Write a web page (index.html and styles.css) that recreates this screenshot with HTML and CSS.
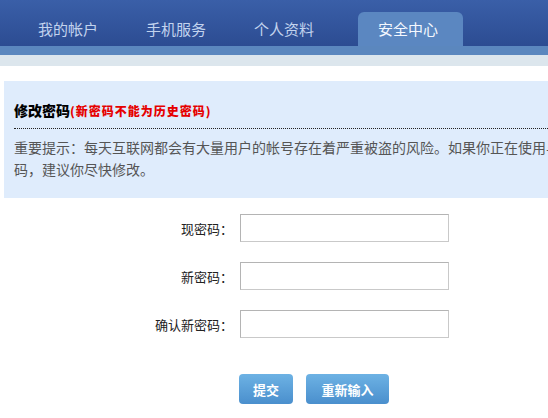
FILE: index.html
```html
<!DOCTYPE html>
<html lang="zh">
<head>
<meta charset="utf-8">
<title>修改密码</title>
<link rel="stylesheet" href="styles.css">
</head>
<body>
<div class="page">
  <div class="nav">
    <a class="tab">我的帐户</a>
    <a class="tab">手机服务</a>
    <a class="tab">个人资料</a>
    <a class="tab active">安全中心</a>
  </div>
  <div class="band-light"></div>
  <div class="band-pale"></div>

  <div class="panel">
    <div class="panel-head">
      <span class="title">修改密码</span><span class="warn">(新密码不能为历史密码)</span>
    </div>
    <p class="tip">重要提示：每天互联网都会有大量用户的帐号存在着严重被盗的风险。如果你正在使用与其他网站相同的密<br>码，建议你尽快修改。</p>
  </div>

  <form class="form">
    <label class="label">现密码：</label>
    <input class="field" type="password">
    <label class="label">新密码：</label>
    <input class="field" type="password">
    <label class="label">确认新密码：</label>
    <input class="field" type="password">
  </form>

  <div class="actions">
    <button class="btn" type="button">提交</button>
    <button class="btn" type="button">重新输入</button>
  </div>
</div>
</body>
</html>
```

FILE: styles.css
```css
html, body {
  margin: 0;
  padding: 0;
  background: #ffffff;
  overflow: hidden;
}

body {
  font-family: "Noto Sans CJK SC", "DejaVu Sans", sans-serif;
  width: 548px;
  height: 418px;
}

.page {
  width: 760px;
}

.nav {
  height: 46px;
  box-sizing: border-box;
  padding: 12px 0 0 18px;
  display: flex;
  align-items: flex-end;
  background: linear-gradient(#3a5fa8, #2c4c92);
}

.tab {
  display: block;
  height: 34px;
  line-height: 34px;
  padding: 0 20px;
  margin-right: 8px;
  font-size: 15px;
  color: #c2d3ee;
  white-space: nowrap;
}

.tab.active {
  margin-left: 16px;
  padding: 0 25px 0 20px;
  background: #5b87c1;
  border-radius: 6px 6px 0 0;
  color: #f4f8ff;
}

.band-light {
  height: 9px;
  background: #5b87be;
}

.band-pale {
  height: 11px;
  background: #dce6ed;
}

.panel {
  margin: 15px 0 0 4px;
  background: #dfecfc;
  padding: 18px 0 18px 10px;
}

.panel-head {
  height: 20px;
  line-height: 20px;
  padding-bottom: 9px;
  border-bottom: 1px dotted #222;
  white-space: nowrap;
}

.title {
  font-size: 14px;
  font-weight: 900;
  color: #000;
}

.warn {
  font-size: 12px;
  font-weight: 900;
  color: #e60000;
  letter-spacing: 1px;
}

.tip {
  margin: 0;
  padding-top: 7px;
  font-size: 14px;
  line-height: 22px;
  color: #555;
  white-space: nowrap;
}

.form {
  margin: 16px 0 0 0;
  display: grid;
  grid-template-columns: 233px 209px;
  column-gap: 7px;
  row-gap: 20px;
  align-items: center;
}

.label {
  text-align: right;
  font-size: 13px;
  color: #222;
}

.field {
  box-sizing: border-box;
  width: 209px;
  height: 28px;
  margin: 0;
  border: 1px solid #c9c9c9;
  border-top-color: #b4b4b4;
  border-left-color: #b4b4b4;
  background: #fff;
}

.actions {
  margin: 36px 0 0 239px;
  display: flex;
  gap: 13px;
}

.btn {
  height: 30px;
  padding: 0 12px;
  border: none;
  border-radius: 4px;
  background: linear-gradient(#6db2e4, #4a8fcd);
  color: #fff;
  font-family: "Noto Sans CJK SC", sans-serif;
  font-size: 13px;
  font-weight: bold;
  min-width: 54px;
}

.btn + .btn {
  width: 83px;
}
```
